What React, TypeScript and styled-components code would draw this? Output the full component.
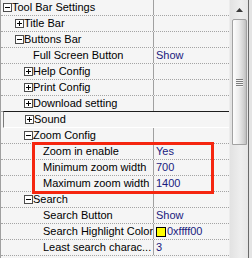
import React from 'react'
import styled, { createGlobalStyle } from 'styled-components'

const GlobalStyle = createGlobalStyle`
  html, body {
    margin: 0;
    padding: 0;
    background: #ffffff;
  }
  body {
    font-family: 'Liberation Sans', Arial, sans-serif;
  }
`

const Frame = styled.div`
  position: relative;
  display: flex;
  width: 252px;
  height: 258px;
  overflow: hidden;
  background: #f5f5f5;
`

const Grid = styled.div`
  width: 230px;
  display: flex;
  flex-direction: column;
  border-left: 1px solid #a0a0a0;
`

const Row = styled.div<{ $sunken?: boolean }>`
  display: flex;
  flex: 0 0 auto;
  box-sizing: border-box;
  height: ${(p) => (p.$sunken ? '17px' : '16px')};
  margin-top: ${(p) => (p.$sunken ? '-1px' : '0')};
  margin-left: ${(p) => (p.$sunken ? '2px' : '0')};
  border-top: ${(p) => (p.$sunken ? '1px solid #1e1e1e' : 'none')};
  border-left: ${(p) => (p.$sunken ? '1px solid #7a7a7a' : 'none')};
  border-bottom: ${(p) => (p.$sunken ? '1px solid #ffffff' : '1px dotted #a4a4a4')};
  font-size: 11px;
  line-height: 15px;
  color: #000000;
  white-space: nowrap;
`

const NameCell = styled.div<{ $indent: number }>`
  display: flex;
  align-items: center;
  box-sizing: border-box;
  width: 152px;
  padding-left: ${(p) => p.$indent}px;
  overflow: hidden;
`

const ValueCell = styled.div<{ $plain?: boolean }>`
  display: flex;
  align-items: center;
  flex: 1;
  padding-left: 2px;
  border-left: ${(p) => (p.$plain ? '1px solid transparent' : '1px solid #a0a0a0')};
  color: #1a1a7e;
  overflow: hidden;
`

const Toggle = styled.span`
  position: relative;
  flex: 0 0 auto;
  box-sizing: border-box;
  width: 9px;
  height: 9px;
  border: 1px solid #4c4c4c;
  background: #ffffff;
  &::before {
    content: '';
    position: absolute;
    left: 1px;
    top: 3px;
    width: 5px;
    height: 1px;
    background: #000000;
  }
`

const PlusToggle = styled(Toggle)`
  &::after {
    content: '';
    position: absolute;
    left: 3px;
    top: 1px;
    width: 1px;
    height: 5px;
    background: #000000;
  }
`

const Label = styled.span`
  padding-left: 0;
`

const Swatch = styled.span`
  display: inline-block;
  box-sizing: border-box;
  width: 10px;
  height: 10px;
  margin: 0 1px 0 0;
  border: 1px solid #000000;
  background: #ffff00;
`

const ScrollBar = styled.div`
  width: 18px;
  display: flex;
  flex-direction: column;
  align-items: center;
  border-left: 1px solid #ececec;
  background: linear-gradient(to right, #e2e2e2, #eeeeee 60%, #e6e6e6);
`

const ArrowButton = styled.div`
  height: 19px;
  width: 100%;
  display: flex;
  align-items: center;
  justify-content: center;
`

const Thumb = styled.div`
  box-sizing: border-box;
  width: 15px;
  height: 126px;
  border: 1px solid #a2a2a2;
  border-radius: 2px 2px 0 0;
  background: linear-gradient(to right, #fdfdfd, #ececec 45%, #cfcfcf 85%, #bdbdbd);
  display: flex;
  flex-direction: column;
  align-items: center;
  justify-content: center;
  gap: 1px;
`

const Grip = styled.span`
  width: 7px;
  height: 1px;
  background: #7c7c7c;
  box-shadow: 0 1px 0 #f4f4f4;
`

const RightEdge = styled.div`
  width: 3px;
  border-left: 1px solid #6a6a6a;
  background: #e4e4e4;
`

const Highlight = styled.div`
  position: absolute;
  left: 32px;
  top: 142px;
  width: 182px;
  height: 52px;
  box-sizing: border-box;
  border: 3px solid #f5260f;
  pointer-events: none;
`

type Item = {
  name: string
  indent: number
  toggle?: 'plus' | 'minus'
  value?: string
  color?: boolean
  sunken?: boolean
}

const items: Item[] = [
  { name: 'Tool Bar Settings', indent: 2, toggle: 'minus' },
  { name: 'Title Bar', indent: 14, toggle: 'plus' },
  { name: 'Buttons Bar', indent: 14, toggle: 'minus' },
  { name: 'Full Screen Button', indent: 32, value: 'Show' },
  { name: 'Help Config', indent: 23, toggle: 'plus' },
  { name: 'Print Config', indent: 23, toggle: 'plus' },
  { name: 'Download setting', indent: 23, toggle: 'plus' },
  { name: 'Sound', indent: 21, toggle: 'plus', sunken: true },
  { name: 'Zoom Config', indent: 23, toggle: 'minus' },
  { name: 'Zoom in enable', indent: 42, value: 'Yes' },
  { name: 'Minimum zoom width', indent: 42, value: '700' },
  { name: 'Maximum zoom width', indent: 42, value: '1400' },
  { name: 'Search', indent: 23, toggle: 'minus' },
  { name: 'Search Button', indent: 42, value: 'Show' },
  { name: 'Search Highlight Color', indent: 42, value: '0xffff00', color: true },
  { name: 'Least search charac...', indent: 42, value: '3' },
]

const App = () => {
  return (
    <>
      <GlobalStyle />
      <Frame>
        <Grid>
          {items.map((it) => (
            <Row key={it.name} $sunken={it.sunken}>
              <NameCell $indent={it.indent}>
                {it.toggle === 'plus' && <PlusToggle />}
                {it.toggle === 'minus' && <Toggle />}
                <Label>{it.name}</Label>
              </NameCell>
              <ValueCell $plain={it.sunken}>
                {it.color && <Swatch />}
                {it.value}
              </ValueCell>
            </Row>
          ))}
        </Grid>
        <ScrollBar>
          <ArrowButton>
            <svg width="7" height="4" viewBox="0 0 7 4">
              <path d="M3.5 0 L7 4 L0 4 Z" fill="#3a3a3a" />
            </svg>
          </ArrowButton>
          <Thumb>
            <Grip />
            <Grip />
            <Grip />
            <Grip />
          </Thumb>
        </ScrollBar>
        <RightEdge />
        <Highlight />
      </Frame>
    </>
  )
}

export default App
